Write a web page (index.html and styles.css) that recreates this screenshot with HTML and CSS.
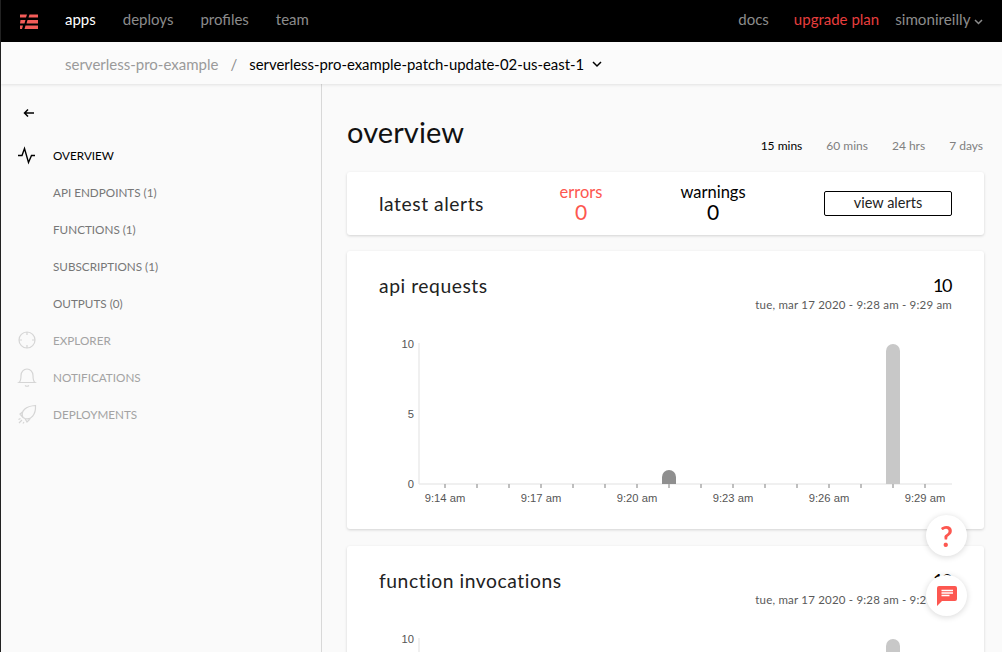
FILE: index.html
```html
<!DOCTYPE html>
<html lang="en">
<head>
<meta charset="utf-8">
<title>overview</title>
<link rel="stylesheet" href="styles.css">
</head>
<body>
<header class="topbar">
  <svg class="logo" width="20" height="15" viewBox="0 0 20 15"><path class="logo-mark" d="M1 .5h7l-1 3H1zM10.500 .5H19v3h-9.500zM1.500 6H6.500l-1 3.500H1zM8.500 6H19v3.500H7.500zM1 11.500h3l-1 3.500H1zM6.500 11.500H19V15H5.500z"/></svg>
  <nav class="topnav">
    <a class="active">apps</a><a>deploys</a><a>profiles</a><a>team</a>
  </nav>
  <nav class="topright">
    <a>docs</a><a class="upgrade">upgrade plan</a>
    <a class="user">simonireilly <svg width="9" height="6" viewBox="0 0 9 6"><path class="chev" d="M1 1l3.500 3.500L8 1"/></svg></a>
  </nav>
</header>
<div class="crumbs">
  <span class="crumb-parent">serverless-pro-example</span>
  <span class="crumb-sep">/</span>
  <span class="crumb-current">serverless-pro-example-patch-update-02-us-east-1</span>
  <svg width="10" height="7" viewBox="0 0 10 7"><path class="chev dark" d="M1 1l4 4 4-4"/></svg>
</div>
<div class="layout">
  <aside class="sidebar">
    <svg class="back" width="12" height="10" viewBox="0 0 12 10"><path class="chev dark" d="M11 5H2M5 1.500L1.500 5 5 8.500"/></svg>
    <ul class="menu">
      <li class="current"><svg width="20" height="20" viewBox="0 0 20 20"><path class="ic" d="M1 10.500h4l2.500-7 4 14 3-7H18"/></svg>OVERVIEW</li>
      <li><i class="noicon"></i>API ENDPOINTS (1)</li>
      <li><i class="noicon"></i>FUNCTIONS (1)</li>
      <li><i class="noicon"></i>SUBSCRIPTIONS (1)</li>
      <li><i class="noicon"></i>OUTPUTS (0)</li>
      <li class="off"><svg width="20" height="20" viewBox="0 0 20 20"><circle class="ic" cx="10" cy="10" r="8"/><path class="ic" d="M10 2v3M10 15v3M2 10h3M15 10h3"/></svg>EXPLORER</li>
      <li class="off"><svg width="20" height="20" viewBox="0 0 20 20"><path class="ic" d="M2 15.500c1.500-1 2-3 2-7a6 6.500 0 0 1 12 0c0 4 .5 6 2 7zM8 18.500q2 1.500 4 0"/></svg>NOTIFICATIONS</li>
      <li class="off"><svg width="20" height="20" viewBox="0 0 20 20"><path class="ic" d="M6 13.500C3 7 9 2 18.500 1.500c.5 9-4.500 15-10.500 13zM6 13.500l-3-3.500 3-2.500M8 14.500l2 3.500 3-3M1.500 15.500l2-1M2 19l3-3M6 19.500l1-1.500"/></svg>DEPLOYMENTS</li>
    </ul>
  </aside>
  <main class="main">
    <div class="head">
      <h1>overview</h1>
      <div class="ranges"><span class="sel">15 mins</span><span>60 mins</span><span>24 hrs</span><span>7 days</span></div>
    </div>
    <section class="card alerts">
      <h2>latest alerts</h2>
      <div class="stat err"><span>errors</span><b>0</b></div>
      <div class="stat"><span>warnings</span><b>0</b></div>
      <button class="btn">view alerts</button>
    </section>
    <section class="card chart-card">
      <div class="chart-head">
        <h2>api requests</h2>
        <div class="sum"><b>10</b><span>tue, mar 17 2020 - 9:28 am - 9:29 am</span></div>
      </div>
      <svg class="chart" width="605" height="170" viewBox="0 0 605 170">
        <g class="grid"><path d="M72 6v141M72 147h533"/></g>
        <g class="ticks"><path d="M98 147v4M130 147v4M162 147v4M194 147v4M226 147v4M258 147v4M290 147v4M322 147v4M354 147v4M386 147v4M418 147v4M450 147v4M482 147v4M514 147v4M546 147v4M578 147v4"/></g>
        <path class="bar1" d="M315 147v-7a7 7 0 0 1 14 0v7z"/>
        <path class="bar2" d="M539 147V14a7 7 0 0 1 14 0v133z"/>
        <g class="ylab"><text x="67" y="11">10</text><text x="67" y="81">5</text><text x="67" y="151">0</text></g>
        <g class="xlab"><text x="98" y="165">9:14 am</text><text x="194" y="165">9:17 am</text><text x="290" y="165">9:20 am</text><text x="386" y="165">9:23 am</text><text x="482" y="165">9:26 am</text><text x="578" y="165">9:29 am</text></g>
      </svg>
    </section>
    <section class="card chart-card">
      <div class="chart-head">
        <h2>function invocations</h2>
        <div class="sum"><b>10</b><span>tue, mar 17 2020 - 9:28 am - 9:29 am</span></div>
      </div>
      <svg class="chart" width="605" height="170" viewBox="0 0 605 170">
        <g class="grid"><path d="M72 6v141M72 147h533"/></g>
        <path class="bar2" d="M539 147V14a7 7 0 0 1 14 0v133z"/>
        <g class="ylab"><text x="67" y="11">10</text></g>
      </svg>
    </section>
  </main>
</div>
<button class="fab help">?</button>
<button class="fab chat"><svg width="20" height="20" viewBox="0 0 20 20"><path class="chat-bubble" d="M2 0h16a2 2 0 0 1 2 2v11a2 2 0 0 1-2 2H5l-5 5V2a2 2 0 0 1 2-2z"/><path class="chat-lines" d="M4.500 4.500h11.500M4.500 7h11.500M4.500 9.500h8"/></svg></button>
</body>
</html>
```
FILE: styles.css
```css
* { box-sizing: border-box; }
html { height: 652px; overflow: hidden; }
body {
  margin: 0;
  height: 652px;
  overflow: hidden;
  background: #fafafa;
  border-left: 1px solid #222;
  font-family: Lato, "Noto Sans", sans-serif;
  color: #000;
}
.topbar {
  height: 42px;
  background: #000;
  display: flex;
  align-items: center;
  padding: 0 19px 5px 19px;
  font-size: 15px;
  margin-left: -1px;
}
.logo { margin-right: 26px; margin-top: 5px; }
.logo-mark { fill: #f45c59; }
.topnav { display: flex; gap: 27px; }
.topnav a, .topright a { color: #8c8c8c; }
.topnav a.active { color: #fff; }
.topright { margin-left: auto; display: flex; gap: 25px; align-items: center; }
.topright .upgrade { color: #e83e3e; }
.topright .user { margin-left: -9px; font-size: 15.200px; }
.chev { fill: none; stroke: #8c8c8c; stroke-width: 1.500; }
.chev.dark { stroke: #000; }
.crumbs {
  height: 42px;
  background: #fbfbfb;
  box-shadow: 0 1px 3px rgba(0,0,0,.1);
  display: flex;
  align-items: center;
  padding: 2px 0 0 64px;
  font-size: 15px;
  position: relative;
}
.crumb-parent { color: #9a9a9a; }
.crumb-sep { color: #8c8c8c; margin: 0 12px; }
.crumb-current { color: #000; margin-right: 8px; font-size: 14.900px; }
.layout { display: flex; height: 568px; }
.sidebar { width: 321px; flex: none; border-right: 1px solid #d8d8d8; padding: 24px 0 0 16px; }
.back { display: block; margin: 0 0 18px 6px; }
.menu { list-style: none; margin: 0; padding: 0; }
.menu li {
  height: 37px;
  display: flex;
  align-items: center;
  gap: 16px;
  font-size: 11.700px;
  color: #777;
}
.menu svg { flex: none; }
.noicon { width: 20px; flex: none; }
.menu .current { color: #000; }
.menu .off { color: #a3a3a3; }
.ic { fill: none; stroke: #d5d5d5; stroke-width: 1.200; }
.current .ic { stroke: #000; stroke-width: 1.400; }
.main { flex: 1; padding: 0 18px 0 25px; min-width: 0; }
.head { display: flex; justify-content: space-between; align-items: flex-end; height: 88px; padding: 0 1px 19px 0; position: relative; }
h1 { margin: 0 0 3px; font-size: 29px; font-weight: 400; letter-spacing: .1px; line-height: 36px; color: #111; }
.ranges { display: flex; gap: 24px; font-size: 12px; color: #808080; }
.ranges .sel { color: #000; }
.card { background: #fff; border-radius: 3px; box-shadow: 0 1px 3px rgba(0,0,0,.16); }
h2 { margin: 0; font-size: 19.300px; font-weight: 400; letter-spacing: .55px; color: #222; }
.alerts { height: 63px; display: flex; align-items: center; padding: 0 32px; margin-bottom: 16px; }
.alerts h2 { width: 136px; flex: none; white-space: nowrap; }
.stat { width: 132px; flex: none; display: flex; flex-direction: column; align-items: center; font-size: 16.500px; line-height: 19px; margin-top: -3px; }
.stat b { font-size: 21px; font-weight: 400; line-height: 20px; }
.stat.err { color: #fd5750; }
.btn {
  margin-left: auto;
  flex: none;
  width: 128px; height: 25px;
  background: #fff;
  border: 1px solid #000;
  border-radius: 2px;
  font: 400 14.500px Lato, sans-serif;
  color: #222;
  padding: 0 0 2px;
}
.chart-card { height: 278px; padding: 23px 32px 0; margin-bottom: 17px; }
.chart-head { display: flex; justify-content: space-between; height: 60px; }
.sum { display: flex; flex-direction: column; align-items: flex-end; margin-top: -1px; }
.sum b { font-size: 18px; font-weight: 400; line-height: 24px; letter-spacing: -1.500px; margin-right: 1px; }
.sum span { font-size: 11.500px; color: #5a5a5a; letter-spacing: .2px; line-height: 16px; }
.chart { display: block; margin-left: -32px; margin-top: 3px; overflow: visible; }
.grid path { fill: none; stroke: #ececec; stroke-width: 1.500; }
.ticks path { stroke: #aaa; stroke-width: 1.500; fill: none; }
.bar1 { fill: #8f8f8f; }
.bar2 { fill: #c8c8c8; }
.ylab text, .xlab text { font-family: "Liberation Sans", sans-serif; font-size: 11.200px; fill: #555; }
.ylab text { text-anchor: end; }
.xlab text { text-anchor: middle; }
.fab {
  position: fixed;
  width: 41px; height: 41px;
  right: 35px;
  border: 0;
  border-radius: 50%;
  background: #fff;
  box-shadow: 0 1px 6px rgba(0,0,0,.16);
  display: flex;
  align-items: center;
  justify-content: center;
  padding: 0;
}
.help { top: 515px; color: #fd5750; font: 700 28px Lato, sans-serif; }
.chat { top: 575px; }
.chat-bubble { fill: #fd5750; }
.chat-lines { stroke: #fff; stroke-width: 1.500; fill: none; }
```
